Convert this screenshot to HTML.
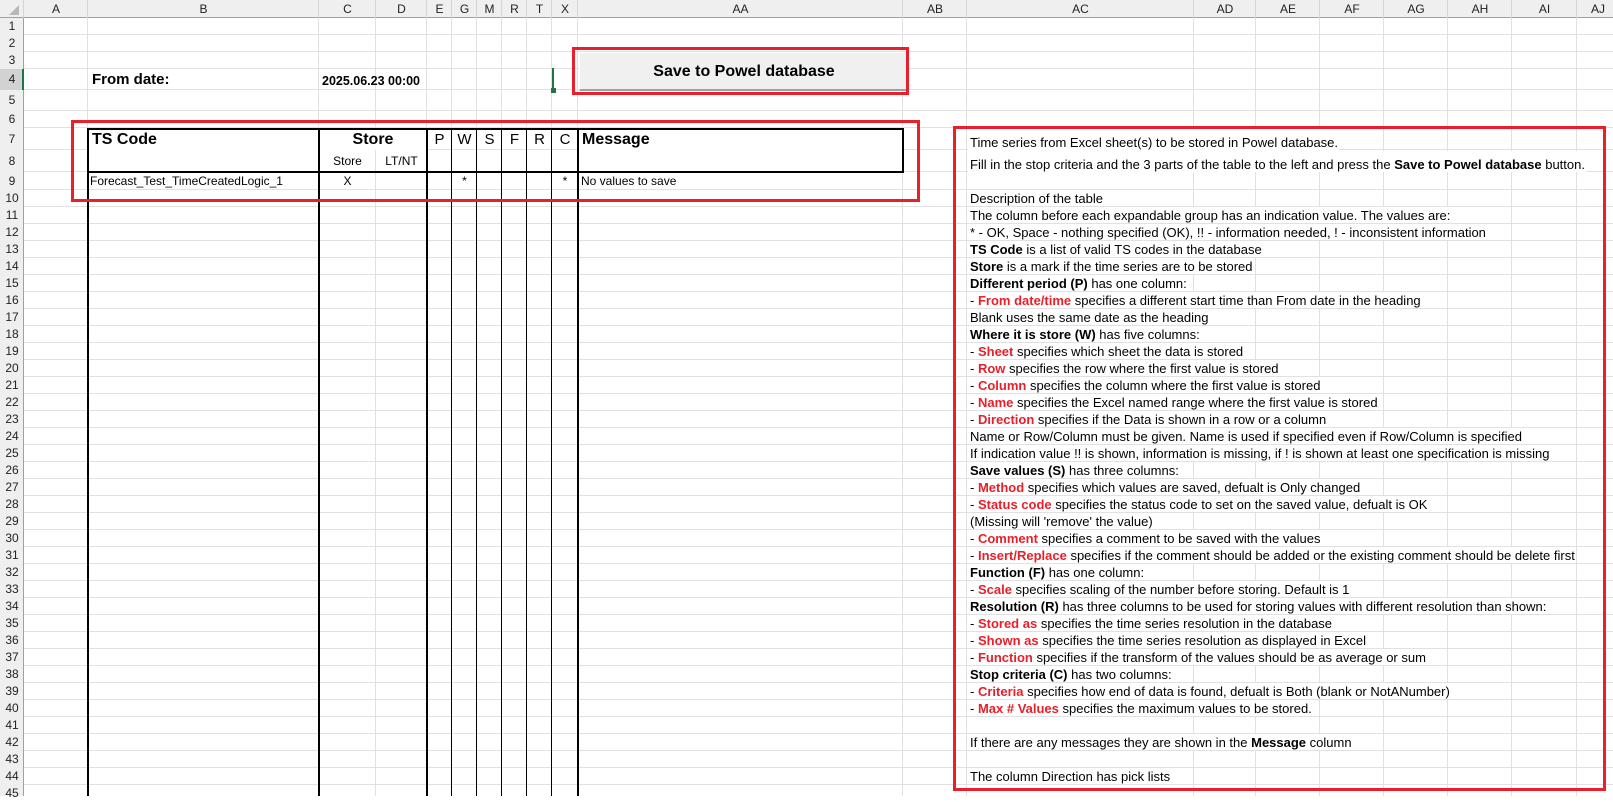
<!DOCTYPE html>
<html><head><meta charset="utf-8">
<style>
*{margin:0;padding:0;box-sizing:border-box}
body{width:1613px;height:796px;overflow:hidden;background:#fff;font-family:"Liberation Sans",Arial,sans-serif;color:#000;position:relative}
.a{position:absolute}
.vl{position:absolute;top:18px;width:1px;height:778px;background:#e1e1e1}
.hl{position:absolute;left:24px;height:1px;width:1589px;background:#e1e1e1}
.ch{position:absolute;top:0;height:18px;font-size:12px;line-height:18px;text-align:center;color:#222}
.rn{position:absolute;left:0;width:24px;font-size:12px;text-align:center;color:#222}
.bl{position:absolute;background:#000}
.t{position:absolute;left:968px;background:#fff;font-size:13px;white-space:nowrap;padding-left:2px;padding-right:1px;display:flex;align-items:flex-end;padding-bottom:0px}
.r{color:#e8202a;font-weight:bold}
</style></head><body>
<div class="a" style="left:0;top:0;width:1613px;height:18px;background:#efefef;border-bottom:1px solid #a0a0a0"></div>
<div class="a" style="left:0;top:18px;width:24px;height:778px;background:#efefef;border-right:1px solid #a0a0a0"></div>
<div class="a" style="left:9px;top:5px;width:0;height:0;border-left:10px solid transparent;border-bottom:10px solid #b8b8b8"></div>
<div class="hl" style="top:34px"></div><div class="hl" style="top:51px"></div><div class="hl" style="top:68px"></div><div class="hl" style="top:89px"></div><div class="hl" style="top:110px"></div><div class="hl" style="top:127px"></div><div class="hl" style="top:149px"></div><div class="hl" style="top:171px"></div><div class="hl" style="top:189px"></div>
<div class="a" style="left:24px;top:190px;width:1589px;height:606px;background:repeating-linear-gradient(to bottom,transparent 0 16px,#e1e1e1 16px 17px)"></div>
<div class="vl" style="left:87px"></div><div class="vl" style="left:318px"></div><div class="vl" style="left:375px"></div><div class="vl" style="left:426px"></div><div class="vl" style="left:451px"></div><div class="vl" style="left:476px"></div><div class="vl" style="left:501px"></div><div class="vl" style="left:526px"></div><div class="vl" style="left:551px"></div><div class="vl" style="left:577px"></div><div class="vl" style="left:902px"></div><div class="vl" style="left:966px"></div><div class="vl" style="left:1193px"></div><div class="vl" style="left:1255px"></div><div class="vl" style="left:1319px"></div><div class="vl" style="left:1383px"></div><div class="vl" style="left:1447px"></div><div class="vl" style="left:1511px"></div><div class="vl" style="left:1576px"></div>
<div class="ch" style="left:24px;width:64px">A</div>
<div class="ch" style="left:88px;width:231px">B</div>
<div class="ch" style="left:319px;width:57px">C</div>
<div class="ch" style="left:376px;width:51px">D</div>
<div class="ch" style="left:427px;width:25px">E</div>
<div class="ch" style="left:452px;width:25px">G</div>
<div class="ch" style="left:477px;width:25px">M</div>
<div class="ch" style="left:502px;width:25px">R</div>
<div class="ch" style="left:527px;width:25px">T</div>
<div class="ch" style="left:552px;width:26px">X</div>
<div class="ch" style="left:578px;width:325px">AA</div>
<div class="ch" style="left:903px;width:64px">AB</div>
<div class="ch" style="left:967px;width:227px">AC</div>
<div class="ch" style="left:1194px;width:62px">AD</div>
<div class="ch" style="left:1256px;width:64px">AE</div>
<div class="ch" style="left:1320px;width:64px">AF</div>
<div class="ch" style="left:1384px;width:64px">AG</div>
<div class="ch" style="left:1448px;width:64px">AH</div>
<div class="ch" style="left:1512px;width:65px">AI</div>
<div class="ch" style="left:1577px;width:40px;text-align:left;padding-left:14px">AJ</div>
<div class="a" style="top:0;height:18px;width:1613px;left:0;background:
linear-gradient(#d4d4d4,#d4d4d4) 87px 0/1px 18px no-repeat,
linear-gradient(#d4d4d4,#d4d4d4) 318px 0/1px 18px no-repeat,
linear-gradient(#d4d4d4,#d4d4d4) 375px 0/1px 18px no-repeat,
linear-gradient(#d4d4d4,#d4d4d4) 426px 0/1px 18px no-repeat,
linear-gradient(#d4d4d4,#d4d4d4) 451px 0/1px 18px no-repeat,
linear-gradient(#d4d4d4,#d4d4d4) 476px 0/1px 18px no-repeat,
linear-gradient(#d4d4d4,#d4d4d4) 501px 0/1px 18px no-repeat,
linear-gradient(#d4d4d4,#d4d4d4) 526px 0/1px 18px no-repeat,
linear-gradient(#d4d4d4,#d4d4d4) 551px 0/1px 18px no-repeat,
linear-gradient(#d4d4d4,#d4d4d4) 577px 0/1px 18px no-repeat,
linear-gradient(#d4d4d4,#d4d4d4) 902px 0/1px 18px no-repeat,
linear-gradient(#d4d4d4,#d4d4d4) 966px 0/1px 18px no-repeat,
linear-gradient(#d4d4d4,#d4d4d4) 1193px 0/1px 18px no-repeat,
linear-gradient(#d4d4d4,#d4d4d4) 1255px 0/1px 18px no-repeat,
linear-gradient(#d4d4d4,#d4d4d4) 1319px 0/1px 18px no-repeat,
linear-gradient(#d4d4d4,#d4d4d4) 1383px 0/1px 18px no-repeat,
linear-gradient(#d4d4d4,#d4d4d4) 1447px 0/1px 18px no-repeat,
linear-gradient(#d4d4d4,#d4d4d4) 1511px 0/1px 18px no-repeat,
linear-gradient(#d4d4d4,#d4d4d4) 1576px 0/1px 18px no-repeat,
linear-gradient(#d4d4d4,#d4d4d4) 23px 0/1px 18px no-repeat"></div>
<div class="a" style="left:0;top:69px;width:24px;height:21px;background:#d2d2d2;border-right:2px solid #217346"></div>
<div class="rn" style="top:18px;line-height:17px">1</div>
<div class="rn" style="top:35px;line-height:17px">2</div>
<div class="rn" style="top:52px;line-height:17px">3</div>
<div class="rn" style="top:69px;line-height:21px">4</div>
<div class="rn" style="top:90px;line-height:21px">5</div>
<div class="rn" style="top:111px;line-height:17px">6</div>
<div class="rn" style="top:128px;line-height:22px">7</div>
<div class="rn" style="top:150px;line-height:22px">8</div>
<div class="rn" style="top:172px;line-height:18px">9</div>
<div class="a" style="left:0;top:190px;width:24px;font-size:12px;line-height:17px;text-align:center;color:#222">10<br>11<br>12<br>13<br>14<br>15<br>16<br>17<br>18<br>19<br>20<br>21<br>22<br>23<br>24<br>25<br>26<br>27<br>28<br>29<br>30<br>31<br>32<br>33<br>34<br>35<br>36<br>37<br>38<br>39<br>40<br>41<br>42<br>43<br>44<br>45</div>

<div class="a" style="left:92px;top:69px;font-size:15px;font-weight:bold;line-height:21px">From date:</div>
<div class="a" style="left:322px;top:71px;font-size:12.5px;font-weight:bold;line-height:20px">2025.06.23 00:00</div>
<div class="a" style="left:552px;top:68px;width:2px;height:22px;background:#217346"></div>
<div class="a" style="left:551px;top:88px;width:5px;height:5px;background:#217346"></div>

<div class="a" style="left:579px;top:52px;width:330px;height:39px;background:#f0f0f0;border-right:2px solid #a0a0a0;border-bottom:2px solid #a0a0a0;border-top:1px solid #fff;border-left:1px solid #fff"></div>
<div class="a" style="left:579px;top:52px;width:330px;height:39px;font-size:16px;font-weight:bold;text-align:center;line-height:39px">Save to Powel database</div>
<div class="a" style="left:572px;top:47px;width:337px;height:48px;border:3px solid #e8202a"></div>

<div class="a" style="left:89px;top:129px;width:229px;height:42px;background:#fff"></div>
<div class="a" style="left:320px;top:129px;width:106px;height:21px;background:#fff"></div>
<div class="a" style="left:579px;top:129px;width:323px;height:42px;background:#fff"></div>
<div class="a" style="left:92px;top:129px;font-size:16px;font-weight:bold;line-height:21px">TS Code</div>
<div class="a" style="left:319px;top:129px;width:108px;text-align:center;font-size:16px;font-weight:bold;line-height:21px">Store</div>
<div class="a" style="left:319px;top:151px;width:57px;text-align:center;font-size:12px;line-height:21px">Store</div>
<div class="a" style="left:376px;top:151px;width:51px;text-align:center;font-size:12px;line-height:21px">LT/NT</div>
<div class="a" style="left:427px;top:129px;width:25px;text-align:center;font-size:15px;line-height:21px">P</div>
<div class="a" style="left:452px;top:129px;width:25px;text-align:center;font-size:15px;line-height:21px">W</div>
<div class="a" style="left:477px;top:129px;width:25px;text-align:center;font-size:15px;line-height:21px">S</div>
<div class="a" style="left:502px;top:129px;width:25px;text-align:center;font-size:15px;line-height:21px">F</div>
<div class="a" style="left:527px;top:129px;width:25px;text-align:center;font-size:15px;line-height:21px">R</div>
<div class="a" style="left:552px;top:129px;width:26px;text-align:center;font-size:15px;line-height:21px">C</div>
<div class="a" style="left:582px;top:129px;font-size:16px;font-weight:bold;line-height:21px">Message</div>
<div class="a" style="left:90px;top:173px;font-size:12px;line-height:17px">Forecast_Test_TimeCreatedLogic_1</div>
<div class="a" style="left:319px;top:173px;width:57px;text-align:center;font-size:12px;line-height:17px">X</div>
<div class="a" style="left:452px;top:173px;width:25px;text-align:center;font-size:12px;line-height:17px">*</div>
<div class="a" style="left:552px;top:173px;width:26px;text-align:center;font-size:12px;line-height:17px">*</div>
<div class="a" style="left:581px;top:173px;font-size:12px;line-height:17px">No values to save</div>

<div class="bl" style="left:87px;top:128px;width:817px;height:2px"></div>
<div class="bl" style="left:87px;top:171px;width:817px;height:2px"></div>
<div class="bl" style="left:902px;top:128px;width:2px;height:45px"></div>
<div class="bl" style="left:87px;top:128px;width:2px;height:668px"></div>
<div class="bl" style="left:318px;top:128px;width:2px;height:668px"></div>
<div class="bl" style="left:426px;top:128px;width:2px;height:668px"></div>
<div class="bl" style="left:451px;top:128px;width:1px;height:668px"></div>
<div class="bl" style="left:476px;top:128px;width:1px;height:668px"></div>
<div class="bl" style="left:501px;top:128px;width:1px;height:668px"></div>
<div class="bl" style="left:526px;top:128px;width:1px;height:668px"></div>
<div class="bl" style="left:551px;top:128px;width:1px;height:668px"></div>
<div class="bl" style="left:577px;top:128px;width:2px;height:668px"></div>
<div class="a" style="left:71px;top:120px;width:849px;height:82px;border:3px solid #e8202a"></div>

<div class="t" style="top:129px;height:21px">Time series from Excel sheet(s) to be stored in Powel database.</div>
<div class="t" style="top:151px;height:21px">Fill in the stop criteria and the 3 parts of the table to the left and press the&nbsp;<b>Save to Powel database</b>&nbsp;button.</div>
<div class="t" style="top:190px;height:16px">Description of the table</div>
<div class="t" style="top:207px;height:16px">The column before each expandable group has an indication value. The values are:</div>
<div class="t" style="top:224px;height:16px">* - OK, Space - nothing specified (OK), !! - information needed, ! - inconsistent information</div>
<div class="t" style="top:241px;height:16px"><b>TS Code</b>&nbsp;is a list of valid TS codes in the database</div>
<div class="t" style="top:258px;height:16px"><b>Store</b>&nbsp;is a mark if the time series are to be stored</div>
<div class="t" style="top:275px;height:16px"><b>Different period (P)</b>&nbsp;has one column:</div>
<div class="t" style="top:292px;height:16px">-&nbsp;<span class="r">From date/time</span>&nbsp;specifies a different start time than From date in the heading</div>
<div class="t" style="top:309px;height:16px">Blank uses the same date as the heading</div>
<div class="t" style="top:326px;height:16px"><b>Where it is store (W)</b>&nbsp;has five columns:</div>
<div class="t" style="top:343px;height:16px">-&nbsp;<span class="r">Sheet</span>&nbsp;specifies which sheet the data is stored</div>
<div class="t" style="top:360px;height:16px">-&nbsp;<span class="r">Row</span>&nbsp;specifies the row where the first value is stored</div>
<div class="t" style="top:377px;height:16px">-&nbsp;<span class="r">Column</span>&nbsp;specifies the column where the first value is stored</div>
<div class="t" style="top:394px;height:16px">-&nbsp;<span class="r">Name</span>&nbsp;specifies the Excel named range where the first value is stored</div>
<div class="t" style="top:411px;height:16px">-&nbsp;<span class="r">Direction</span>&nbsp;specifies if the Data is shown in a row or a column</div>
<div class="t" style="top:428px;height:16px">Name or Row/Column must be given. Name is used if specified even if Row/Column is specified</div>
<div class="t" style="top:445px;height:16px">If indication value !! is shown, information is missing, if ! is shown at least one specification is missing</div>
<div class="t" style="top:462px;height:16px"><b>Save values (S)</b>&nbsp;has three columns:</div>
<div class="t" style="top:479px;height:16px">-&nbsp;<span class="r">Method</span>&nbsp;specifies which values are saved, defualt is Only changed</div>
<div class="t" style="top:496px;height:16px">-&nbsp;<span class="r">Status code</span>&nbsp;specifies the status code to set on the saved value, defualt is OK</div>
<div class="t" style="top:513px;height:16px">(Missing will 'remove' the value)</div>
<div class="t" style="top:530px;height:16px">-&nbsp;<span class="r">Comment</span>&nbsp;specifies a comment to be saved with the values</div>
<div class="t" style="top:547px;height:16px">-&nbsp;<span class="r">Insert/Replace</span>&nbsp;specifies if the comment should be added or the existing comment should be delete first</div>
<div class="t" style="top:564px;height:16px"><b>Function (F)</b>&nbsp;has one column:</div>
<div class="t" style="top:581px;height:16px">-&nbsp;<span class="r">Scale</span>&nbsp;specifies scaling of the number before storing. Default is 1</div>
<div class="t" style="top:598px;height:16px"><b>Resolution (R)</b>&nbsp;has three columns to be used for storing values with different resolution than shown:</div>
<div class="t" style="top:615px;height:16px">-&nbsp;<span class="r">Stored as</span>&nbsp;specifies the time series resolution in the database</div>
<div class="t" style="top:632px;height:16px">-&nbsp;<span class="r">Shown as</span>&nbsp;specifies the time series resolution as displayed in Excel</div>
<div class="t" style="top:649px;height:16px">-&nbsp;<span class="r">Function</span>&nbsp;specifies if the transform of the values should be as average or sum</div>
<div class="t" style="top:666px;height:16px"><b>Stop criteria (C)</b>&nbsp;has two columns:</div>
<div class="t" style="top:683px;height:16px">-&nbsp;<span class="r">Criteria</span>&nbsp;specifies how end of data is found, defualt is Both (blank or NotANumber)</div>
<div class="t" style="top:700px;height:16px">-&nbsp;<span class="r">Max # Values</span>&nbsp;specifies the maximum values to be stored.</div>
<div class="t" style="top:734px;height:16px">If there are any messages they are shown in the&nbsp;<b>Message</b>&nbsp;column</div>
<div class="t" style="top:768px;height:16px">The column Direction has pick lists</div>
<div class="a" style="left:953px;top:126px;width:653px;height:665px;border:3px solid #e8202a"></div>
</body></html>
